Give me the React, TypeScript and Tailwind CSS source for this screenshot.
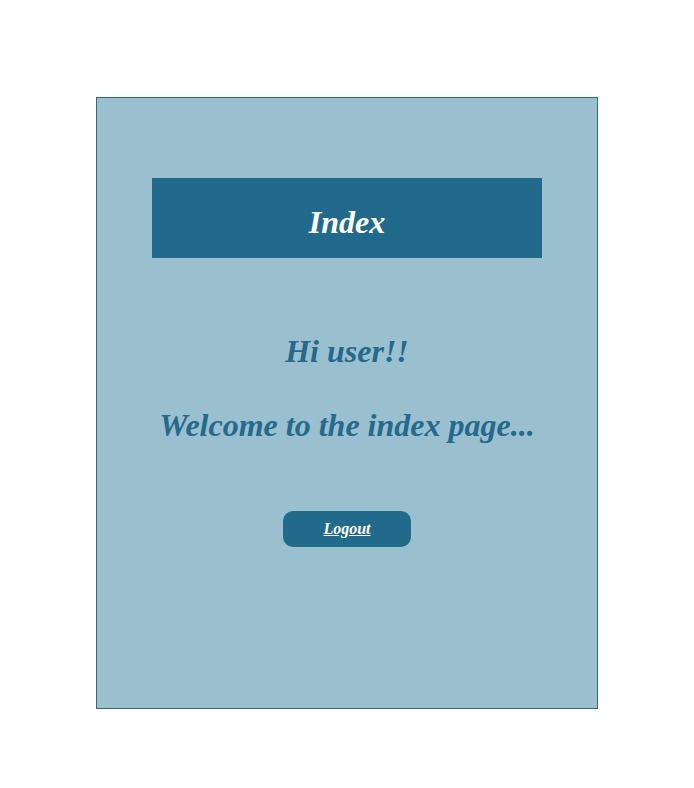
export default function App() {
  return (
    <div className="min-h-[788px] bg-white pt-[97px] font-['Liberation_Serif','Times_New_Roman',serif]">
      <div className="mx-auto flex h-[612px] w-[502px] flex-col items-center border border-[#2f6b78] bg-[#9abfce]">
        <div className="mt-[80px] h-[80px] w-[390px] bg-[#226a8b] pt-[24px] text-center">
          <h1 className="text-[32px] leading-[40px] font-bold italic text-white">Index</h1>
        </div>

        <h2 className="mt-[73px] text-[32px] leading-[40px] font-bold italic text-[#236a8c]">Hi user!!</h2>
        <h2 className="mt-[34px] text-[32px] leading-[40px] font-bold italic text-[#236a8c]">
          Welcome to the index page...
        </h2>

        <button className="mt-[66px] flex h-[36px] w-[128px] items-center justify-center rounded-[10px] bg-[#226a8b]">
          <a href="#" className="text-[16px] leading-[20px] font-bold italic text-white underline">
            Logout
          </a>
        </button>
      </div>
    </div>
  );
}
